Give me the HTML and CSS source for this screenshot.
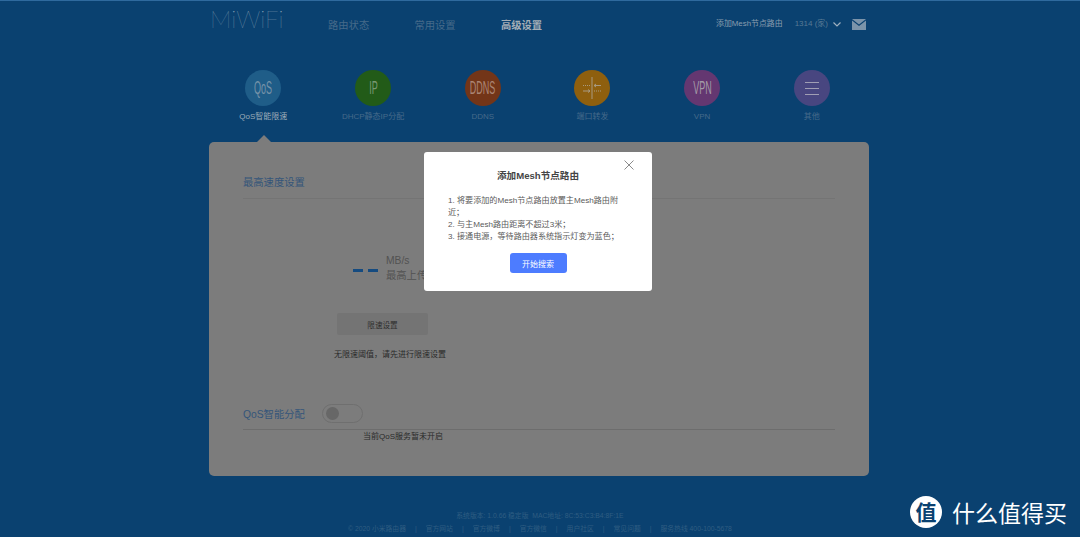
FILE: index.html
```html
<!DOCTYPE html>
<html lang="en">
<head>
    <meta charset="UTF-8">
    <meta name="viewport" content="width=device-width, initial-scale=1.0">
    <title>MiWiFi</title>
    <link rel="stylesheet" href="styles.css">
</head>
<body>
    <div class="header">
        <a href="#" class="logo">MiWiFi</a>
        <div class="nav">
            <a href="#">路由状态</a>
            <a href="#">常用设置</a>
            <a href="#" class="active">高级设置</a>
        </div>
        <div class="header-right">
            <a href="#" class="add-mesh">添加Mesh节点路由</a>
            <span class="router-name">1314 (家)</span>
            <svg class="chevron" width="8" height="5" viewBox="0 0 8 5"><path d="M0.5 0.5 L4 4 L7.5 0.5" fill="none" stroke="#9fb0bf" stroke-width="1.2"/></svg>
            <svg class="mail" width="14" height="11" viewBox="0 0 14 11"><path d="M0 0 H14 L7 5.5 Z" fill="#7b94aa"/><path d="M0 1.6 L7 7 L14 1.6 V11 H0 Z" fill="#7b94aa"/></svg>
        </div>
    </div>

    <div class="tabs">
        <div class="tab current">
            <div class="circle qos"><span class="circle-text">QoS</span></div>
            <div class="tab-label">QoS智能限速</div>
        </div>
        <div class="tab">
            <div class="circle ip"><span class="circle-text">IP</span></div>
            <div class="tab-label">DHCP静态IP分配</div>
        </div>
        <div class="tab">
            <div class="circle ddns"><span class="circle-text">DDNS</span></div>
            <div class="tab-label">DDNS</div>
        </div>
        <div class="tab">
            <div class="circle port">
                <svg width="22" height="22" viewBox="0 0 22 22">
                    <path d="M11 0 V22" stroke="#a89a80" stroke-width="1" fill="none"/>
                    <path d="M2 8.5 H9" stroke="#a89a80" stroke-width="1" stroke-dasharray="1 1" fill="none"/>
                    <path d="M13 8.5 H20 M13 8.5 L15 7 M13 8.5 L15 10" stroke="#a89a80" stroke-width="1" fill="none"/>
                    <path d="M2 14 H9 M9 14 L7 12.5 M9 14 L7 15.5" stroke="#a89a80" stroke-width="1" fill="none"/>
                    <path d="M13 14 H20" stroke="#a89a80" stroke-width="1" stroke-dasharray="1 1" fill="none"/>
                </svg>
            </div>
            <div class="tab-label">端口转发</div>
        </div>
        <div class="tab">
            <div class="circle vpn"><span class="circle-text">VPN</span></div>
            <div class="tab-label">VPN</div>
        </div>
        <div class="tab">
            <div class="circle other">
                <span class="menu-lines"><i></i><i></i><i></i></span>
            </div>
            <div class="tab-label">其他</div>
        </div>
    </div>

    <div class="panel">
        <h2 class="section-title">最高速度设置</h2>
        <div class="speed-block">
            <div class="speed-value">
                <span class="dash"></span><span class="dash"></span>
            </div>
            <div class="speed-info">
                <div>MB/s</div>
                <div>最高上传速度</div>
            </div>
        </div>
        <button class="limit-btn">限速设置</button>
        <p class="limit-note">无限速阈值，请先进行限速设置</p>
        <div class="qos-row">
            <h2 class="qos-title">QoS智能分配</h2>
            <span class="toggle"><i></i></span>
        </div>
        <p class="qos-note">当前QoS服务暂未开启</p>
    </div>

    <div class="footer">
        <div>系统版本: 1.0.66 稳定版&nbsp;&nbsp;MAC地址: 8C:53:C3:B4:8F:1E</div>
        <div class="footer-links">
            <span>© 2020 小米路由器</span><b>|</b>
            <span>官方网站</span><b>|</b>
            <span>官方微博</span><b>|</b>
            <span>官方微信</span><b>|</b>
            <span>用户社区</span><b>|</b>
            <span>常见问题</span><b>|</b>
            <span>服务热线 400-100-5678</span>
        </div>
    </div>

    <div class="modal">
        <button class="modal-close">
            <svg width="10" height="10" viewBox="0 0 10 10"><path d="M0.5 0.5 L9.5 9.5 M9.5 0.5 L0.5 9.5" stroke="#8a8a8a" stroke-width="1" fill="none"/></svg>
        </button>
        <h3 class="modal-title">添加Mesh节点路由</h3>
        <div class="modal-body">
            <div>1. 将要添加的Mesh节点路由放置主Mesh路由附近；</div>
            <div>2. 与主Mesh路由距离不超过3米；</div>
            <div>3. 接通电源，等待路由器系统指示灯变为蓝色；</div>
        </div>
        <button class="search-btn">开始搜索</button>
    </div>

    <div class="watermark">
        <span class="watermark-badge">值</span>
        <span class="watermark-text">什么值得买</span>
    </div>
</body>
</html>
```

FILE: styles.css
```css
body {
    margin: 0;
    height: 537px;
    overflow: hidden;
    box-sizing: border-box;
    border-top: 1px solid #2f6a9e;
    background: #0a4170;
    font-family: 'Liberation Sans', 'Noto Sans CJK SC', sans-serif;
    color: #6f8aa1;
    position: relative;
}

a {
    color: inherit;
    text-decoration: none;
}

/* Header Section */
.header {
    display: flex;
    align-items: center;
    height: 48px;
    padding: 0 214px 0 212px;
}

.logo {
    width: 118px;
    margin-left: -2px;
    font-family: 'Lato', sans-serif;
    font-weight: 100;
    font-size: 24px;
    line-height: 36px;
    margin-top: -12px;
    color: #93a8b9;
}

.nav {
    display: flex;
    gap: 45.3px;
    font-size: 10.3px;
    margin-top: -2px;
    color: #466a8a;
}

.nav .active {
    color: #a3aeb7;
    font-weight: bold;
}

.header-right {
    display: flex;
    align-items: center;
    margin-left: auto;
    font-size: 7.9px;
    margin-top: -2px;
}

.add-mesh {
    color: #8a9eaf;
    margin-bottom: 3px;
}

.router-name {
    color: #587a94;
    margin-left: 12px;
    margin-bottom: 3px;
    font-size: 8px;
}

.chevron {
    margin-left: 5px;
}

.mail {
    margin-left: 11px;
}

/* Tabs */
.tabs {
    display: flex;
    padding-left: 208.5px;
    margin-top: 21px;
}

.tab {
    width: 109.7px;
    display: flex;
    flex-direction: column;
    align-items: center;
    position: relative;
}

.tab.current::after {
    content: "";
    position: absolute;
    left: 48px;
    top: 65px;
    border-left: 7px solid transparent;
    border-right: 7px solid transparent;
    border-bottom: 7px solid #7c7c7c;
}

.circle {
    width: 36px;
    height: 36px;
    border-radius: 50%;
    display: flex;
    align-items: center;
    justify-content: center;
}

.circle-text {
    font-size: 18px;
    transform: scaleX(0.5);
    color: #a39aa6;
}

.qos { background: #1f5d88; }
.qos .circle-text { color: #7693a8; }
.ip { background: #225b18; }
.ip .circle-text { color: #789870; }
.ddns { background: #733518; }
.ddns .circle-text { color: #ab8675; }
.port { background: #8e5f0e; }
.vpn { background: #643771; }
.other { background: #484680; }

.menu-lines {
    display: flex;
    flex-direction: column;
    gap: 5px;
}

.menu-lines i {
    display: block;
    width: 14px;
    height: 1px;
    background: #a09eb4;
}

.tab-label {
    margin-top: 5px;
    font-size: 8px;
    line-height: 12px;
    white-space: nowrap;
    color: #466a8a;
}

.current .tab-label {
    color: #9cacb8;
}

/* Main panel */
.panel {
    width: 660px;
    height: 334px;
    margin: 19px 0 0 209px;
    box-sizing: border-box;
    padding: 33px 34px 0;
    background: #7c7c7c;
    border-radius: 5px;
}

.section-title {
    margin: 0;
    height: 23px;
    line-height: 16px;
    font-size: 10.3px;
    font-weight: normal;
    color: #34557a;
    border-bottom: 1px solid #747474;
}

.speed-block {
    display: flex;
    align-items: center;
    gap: 8px;
    margin: 52px 0 0 110px;
    height: 34px;
}

.speed-value {
    display: flex;
    gap: 5px;
    margin-top: 5px;
}

.dash {
    display: block;
    width: 10px;
    height: 3px;
    background: #154b80;
}

.speed-info {
    font-size: 10.3px;
    line-height: 15px;
    color: #525252;
}

.limit-btn {
    display: block;
    width: 91px;
    height: 22px;
    margin: 28px 0 0 94px;
    padding: 0;
    border: none;
    border-radius: 2px;
    background: #747474;
    font-family: inherit;
    font-size: 7.6px;
    color: #2e2e2e;
}

.limit-note {
    margin: 14px 0 0 91px;
    font-size: 8px;
    line-height: 12px;
    color: #2a2a2a;
}

.qos-row {
    display: flex;
    align-items: center;
    gap: 17px;
    margin-top: 38px;
    height: 29px;
    padding-bottom: 1px;
    border-bottom: 1px solid #6d6d6d;
}

.qos-title {
    margin: 0;
    font-size: 10.3px;
    font-weight: normal;
    color: #34557a;
}

.toggle {
    display: block;
    box-sizing: border-box;
    width: 41px;
    height: 19px;
    border: 1px solid #6f6f6f;
    border-radius: 10px;
    padding: 2px 3px;
}

.toggle i {
    display: block;
    width: 13px;
    height: 13px;
    border-radius: 50%;
    background: #676767;
}

.qos-note {
    margin: 1px 0 0 120px;
    font-size: 8px;
    line-height: 12px;
    color: #2a2a2a;
}

/* Footer */
.footer {
    margin-top: 33px;
    text-align: center;
    font-size: 6.8px;
    line-height: 13px;
    color: #2f5d82;
}

.footer-links {
    display: flex;
    justify-content: center;
    gap: 9px;
}

.footer-links b {
    font-weight: normal;
}

/* Modal */
.modal {
    position: absolute;
    left: 424px;
    top: 151px;
    width: 228px;
    height: 139px;
    box-sizing: border-box;
    padding: 17px 24px 0;
    background: #fff;
    border-radius: 3px;
}

.modal-close {
    position: absolute;
    right: 18px;
    top: 8px;
    padding: 0;
    border: none;
    background: none;
    line-height: 0;
}

.modal-title {
    margin: 0;
    text-align: center;
    font-size: 9.6px;
    line-height: 14px;
    color: #444;
}

.modal-body {
    margin: 12px 6px 0 0;
    font-size: 8.1px;
    line-height: 12.1px;
    color: #5a5a5a;
}

.search-btn {
    display: block;
    width: 57px;
    height: 20px;
    margin: 10px auto 0;
    padding: 0;
    border: none;
    border-radius: 3px;
    background: #4d7cff;
    font-family: inherit;
    font-size: 8px;
    color: #fff;
}

/* Watermark */
.watermark {
    position: absolute;
    left: 910px;
    top: 494px;
    display: flex;
    align-items: center;
    gap: 10px;
}

.watermark-badge {
    width: 32px;
    height: 32px;
    border-radius: 50%;
    background: #fff;
    color: #0a4170;
    font-size: 21px;
    font-weight: bold;
    line-height: 31px;
    text-align: center;
    font-family: 'Noto Sans CJK SC', sans-serif;
}

.watermark-text {
    font-size: 23px;
    color: #fff;
    font-family: 'Noto Sans CJK SC', sans-serif;
}
```
